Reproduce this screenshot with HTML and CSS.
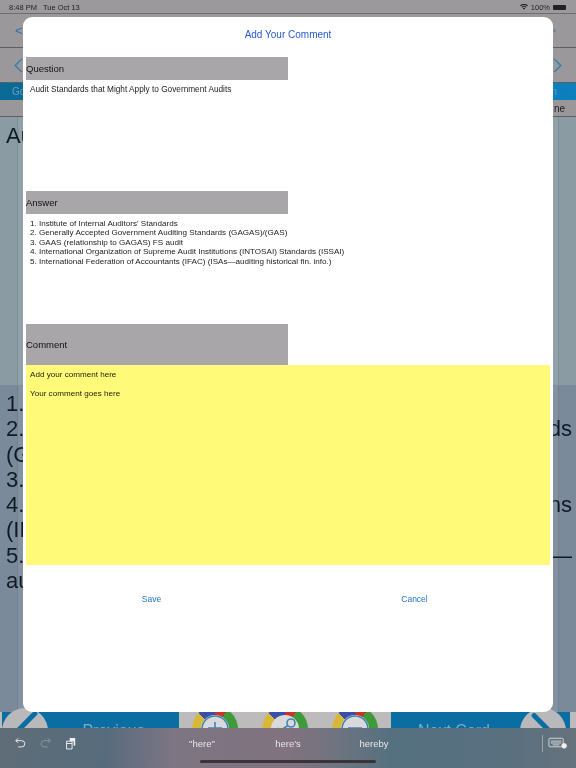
FILE: index.html
```html
<!DOCTYPE html>
<html>
<head>
    <meta charset="utf-8">
    <link rel="stylesheet" href="styles.css">
</head>
<body>
    <div class="app">
        <div class="status-bar">
            <span class="status-time">8:48 PM</span>
            <span class="status-date">Tue Oct 13</span>
            <span class="status-right">
                <svg class="wifi" viewBox="0 0 14 10"><path d="M7 9.6 4.9 7.3a3 3 0 0 1 4.2 0zM3.7 6.1 2.5 4.8a6.5 6.5 0 0 1 9 0l-1.2 1.3a4.8 4.8 0 0 0-6.6 0zM1.3 3.6 0 2.3a10 10 0 0 1 14 0l-1.3 1.3a8.2 8.2 0 0 0-11.4 0z"/></svg>
                <span>100%</span>
                <span class="battery"></span>
            </span>
        </div>
        <div class="nav-row nav-small">
            <span class="chev">&lt;</span>
            <span class="chev chev-tiny">&gt;</span>
        </div>
        <div class="nav-row nav-big">
            <svg class="arrow" viewBox="0 0 10 18"><path d="M9 1 1 9l8 8"/></svg>
            <svg class="arrow" viewBox="0 0 10 18"><path d="M1 1l8 8-8 8"/></svg>
        </div>
        <div class="blue-row"><span>Go</span><span>n</span></div>
        <div class="grey-row"><span></span><span>ne</span></div>
        <div class="card-top">
            <div class="card-title">Au</div>
        </div>
        <div class="card-bottom">
            <div class="line">1.</div>
            <div class="line line-split"><span>2.</span><span>ds</span></div>
            <div class="line">(G</div>
            <div class="line">3.</div>
            <div class="line line-split"><span>4.</span><span>ns</span></div>
            <div class="line">(IN</div>
            <div class="line line-split"><span>5.</span><span>—</span></div>
            <div class="line">au</div>
        </div>
        <div class="toolbar">
            <div class="tool-blue tool-prev">
                <div class="round-btn"><span class="pencil"></span></div>
                <div class="tool-label">Previous</div>
            </div>
            <div class="tool-icons">
                <div class="ring">
                    <svg class="ring-in" viewBox="0 0 28 28"><circle cx="14" cy="14" r="13"/><path d="M14 7v14M7 13h14"/></svg>
                </div>
                <div class="ring">
                    <svg class="ring-in" viewBox="0 0 28 28"><circle cx="20" cy="8" r="4"/><circle cx="7" cy="17" r="3.5"/><path d="M17 10.5l-7 4.5"/></svg>
                </div>
                <div class="ring">
                    <svg class="ring-in" viewBox="0 0 28 28"><circle cx="14" cy="14" r="13"/><path d="M7 13h14"/></svg>
                </div>
            </div>
            <div class="tool-blue tool-next">
                <div class="tool-label">Next Card</div>
                <div class="round-btn"><span class="pencil pencil-flip"></span></div>
            </div>
        </div>
    </div>

    <div class="modal">
        <div class="modal-title">Add Your Comment</div>
        <div class="section-head head-question">Question</div>
        <div class="section-text text-question">Audit Standards that Might Apply to Government Audits</div>
        <div class="section-head head-answer">Answer</div>
        <div class="section-text text-answer">
            1. Institute of Internal Auditors' Standards<br>
            2. Generally Accepted Government Auditing Standards (GAGAS)/(GAS)<br>
            3. GAAS (relationship to GAGAS) FS audit<br>
            4. International Organization of Supreme Audit Institutions (INTOSAI) Standards (ISSAI)<br>
            5. International Federation of Accountants (IFAC) (ISAs—auditing historical fin. info.)
        </div>
        <div class="section-head head-comment">Comment</div>
        <div class="comment-box">
            <p>Add your comment here</p>
            <p>Your comment goes here</p>
        </div>
        <div class="modal-actions">
            <span>Save</span>
            <span>Cancel</span>
        </div>
    </div>

    <div class="kb-bar">
        <div class="kb-left">
            <svg class="kb-icon" viewBox="0 0 14 14"><path d="M4 1 1 4l3 3M1 4h7.5a4 4 0 0 1 0 8H4"/></svg>
            <svg class="kb-icon kb-dim" viewBox="0 0 14 14"><path d="M10 1l3 3-3 3M13 4H5.5a4 4 0 0 0 0 8H10"/></svg>
            <svg class="kb-icon kb-paste" viewBox="0 0 14 16"><path class="fill" d="M6 1h7v10H11V5H6z"/><path d="M2 5h7v10H2zM2 8h7"/></svg>
        </div>
        <div class="kb-words">
            <span>"here"</span>
            <span>here's</span>
            <span>hereby</span>
        </div>
        <div class="kb-right">
            <svg class="kb-board" viewBox="0 0 20 12"><rect x="1" y="1" width="15" height="9" rx="1"/><path d="M3 4h11M3 6h11M5 8h7"/><circle class="dot" cx="17" cy="9" r="2.5"/></svg>
        </div>
        <div class="home-bar"></div>
    </div>
</body>
</html>
```

FILE: styles.css
```css
html, body {
    margin: 0;
    padding: 0;
}

body {
    width: 576px;
    height: 768px;
    overflow: hidden;
    position: relative;
    font-family: 'Liberation Sans', Arial, sans-serif;
    background: #8a99a3;
    color: #222;
}

.app, .modal, .kb-bar {
    filter: blur(0.3px);
}

.app {
    height: 768px;
    display: flex;
    flex-direction: column;
}

.status-bar {
    height: 14px;
    flex: none;
    display: flex;
    align-items: center;
    padding: 1px 10px 0 9px;
    box-sizing: border-box;
    background: #9c999c;
    color: #222225;
    font-size: 7.5px;
    border-bottom: 1px solid #6d6c70;
}

.status-time {
    margin-right: 6px;
}

.status-right {
    margin-left: auto;
    display: flex;
    align-items: center;
    gap: 3px;
}

.wifi {
    width: 8px;
    height: 6px;
    fill: #222;
}

.battery {
    width: 13px;
    height: 5px;
    background: #222;
    border-radius: 1px;
}

.nav-row {
    flex: none;
    display: flex;
    justify-content: space-between;
    align-items: center;
    box-sizing: border-box;
    background: #9b989c;
    border-bottom: 1px solid #5d5d62;
}

.nav-small {
    height: 34px;
    padding: 0 20px 0 15px;
    color: #2f6fb0;
    font-size: 13px;
}

.chev-tiny {
    font-size: 7px;
}

.nav-big {
    height: 35px;
    padding: 0 14px 0 14px;
}

.arrow {
    width: 9px;
    height: 15px;
    fill: none;
    stroke: #2a7db0;
    stroke-width: 1.5;
}

.blue-row {
    height: 17px;
    flex: none;
    display: flex;
    justify-content: space-between;
    align-items: center;
    padding: 0 19px 0 12px;
    background: linear-gradient(90deg, #0a6a96, #0c7fbd);
    color: #6a9dbb;
    font-size: 10px;
}

.grey-row {
    height: 17px;
    flex: none;
    display: flex;
    justify-content: space-between;
    align-items: center;
    box-sizing: border-box;
    padding: 0 11px 0 12px;
    background: #9a979a;
    color: #222;
    font-size: 10px;
    border-bottom: 1px solid #5d5d62;
}

.card-top, .card-bottom {
    flex: none;
    box-sizing: border-box;
    color: #101a24;
    background-image: linear-gradient(90deg, transparent 17px, rgba(60, 70, 80, 0.15) 17px 18px, rgba(255, 255, 255, 0.06) 18px 558px, rgba(60, 70, 80, 0.15) 558px 559px, transparent 559px);
}

.card-top {
    height: 268px;
    padding: 6px 6px 0;
    background-color: #8a9ba3;
}

.card-title {
    font-size: 22px;
}

.card-bottom {
    height: 327px;
    padding: 6px 4px 0 6px;
    background-color: #7b8a9b;
    font-size: 22px;
    display: flex;
    flex-direction: column;
}

.line {
    height: 25.3px;
    line-height: 25.3px;
}

.line-split {
    display: flex;
    justify-content: space-between;
}

.toolbar {
    height: 56px;
    flex: none;
    display: flex;
    padding: 0 6px 0 2px;
    background: #bdbbbb;
}

.tool-blue {
    flex: none;
    display: flex;
    background: #0a6ea2;
    color: #7fa8c2;
}

.tool-prev {
    width: 177px;
}

.tool-next {
    width: 179px;
    padding-right: 4px;
    box-sizing: border-box;
}

.tool-label {
    flex: 1;
    font-size: 16px;
    text-align: center;
    padding-top: 10px;
}

.tool-next .tool-label {
    padding-right: 3px;
}

.round-btn {
    width: 46px;
    height: 46px;
    flex: none;
    margin-top: -4px;
    border-radius: 50%;
    background: #b9b9bb;
    position: relative;
}

.pencil {
    position: absolute;
    left: 9px;
    top: 12px;
    width: 30px;
    height: 5px;
    border-radius: 2px;
    background: #0a6ea2;
    transform: rotate(-45deg);
}

.pencil-flip {
    left: 8px;
    top: 14px;
    transform: rotate(45deg);
}

.tool-icons {
    flex: 1;
    display: flex;
    justify-content: center;
    gap: 24px;
}

.ring {
    width: 46px;
    height: 46px;
    margin-top: -6px;
    border-radius: 50%;
    background: conic-gradient(#c4352c 0deg 33deg, #3f9a3a 33deg 160deg, #d8b83a 160deg 315deg, #3b4fa8 315deg 360deg);
    display: flex;
    align-items: center;
    justify-content: center;
}

.ring-in {
    width: 28px;
    height: 28px;
    border-radius: 50%;
    background: #d9d9db;
    fill: none;
    stroke: #3d86b5;
    stroke-width: 1.6;
}

.modal {
    position: absolute;
    left: 23px;
    top: 17px;
    width: 530px;
    height: 695px;
    background: #fff;
    border-radius: 9px;
    padding: 0 3px;
    box-sizing: border-box;
    display: flex;
    flex-direction: column;
}

.modal-title {
    height: 40px;
    flex: none;
    line-height: 35px;
    text-align: center;
    font-size: 10px;
    color: #2a5bd0;
}

.section-head {
    width: 262px;
    flex: none;
    display: flex;
    align-items: center;
    background: #a8a6a9;
    color: #111;
    font-size: 9.5px;
}

.head-question, .head-answer {
    height: 23px;
}

.head-comment {
    height: 41px;
}

.section-text {
    flex: none;
    box-sizing: border-box;
    padding-left: 4px;
    font-size: 8.1px;
    line-height: 9.4px;
    color: #1c1c1c;
}

.text-question {
    height: 111px;
    padding-top: 5px;
    font-size: 8.25px;
}

.text-answer {
    height: 110px;
    padding-top: 5px;
}

.comment-box {
    width: 524px;
    height: 200px;
    flex: none;
    box-sizing: border-box;
    padding: 5px 4px;
    background: #fffb78;
    font-size: 8.1px;
    line-height: 9.4px;
    color: #1c1c10;
}

.comment-box p {
    margin: 0 0 9.4px;
}

.modal-actions {
    display: flex;
    width: 526px;
    margin: 29px 0 0 -6px;
    font-size: 8.5px;
    color: #1f74d0;
}

.modal-actions span {
    flex: 1;
    text-align: center;
}

.kb-bar {
    position: absolute;
    left: 0;
    right: 0;
    bottom: 0;
    height: 40px;
    display: flex;
    align-items: center;
    background: linear-gradient(90deg, #5f6d78 0%, #566b7c 18%, #7d7583 30%, #81727f 50%, #6f7480 58%, #55707f 68%, #59707f 88%, #66727c 100%);
    color: #e6e6e8;
    font-size: 9.5px;
    padding-bottom: 10px;
    box-sizing: border-box;
}

.kb-left {
    width: 159px;
    flex: none;
    box-sizing: border-box;
    display: flex;
    align-items: center;
    gap: 14px;
    padding-left: 15px;
}

.kb-icon {
    width: 11px;
    height: 12px;
    fill: none;
    stroke: #f0f0f0;
    stroke-width: 1.2;
}

.kb-dim {
    stroke: #8b98a3;
}

.kb-paste {
    height: 15px;
}

.kb-paste .fill {
    fill: #f0f0f0;
    stroke: none;
}

.kb-words {
    width: 258px;
    flex: none;
    display: grid;
    grid-template-columns: repeat(3, 1fr);
    text-align: center;
}

.kb-right {
    margin-left: auto;
    padding: 0 9px 0 5px;
    border-left: 1px solid #9aa3ab;
    height: 17px;
    display: flex;
    align-items: center;
}

.kb-board {
    width: 19px;
    height: 12px;
    fill: none;
    stroke: #f0f0f0;
    stroke-width: 0.8;
}

.kb-board .dot {
    fill: #f0f0f0;
}

.home-bar {
    position: absolute;
    left: 200px;
    bottom: 5px;
    width: 176px;
    height: 3px;
    border-radius: 2px;
    background: #3a3439;
}
```
